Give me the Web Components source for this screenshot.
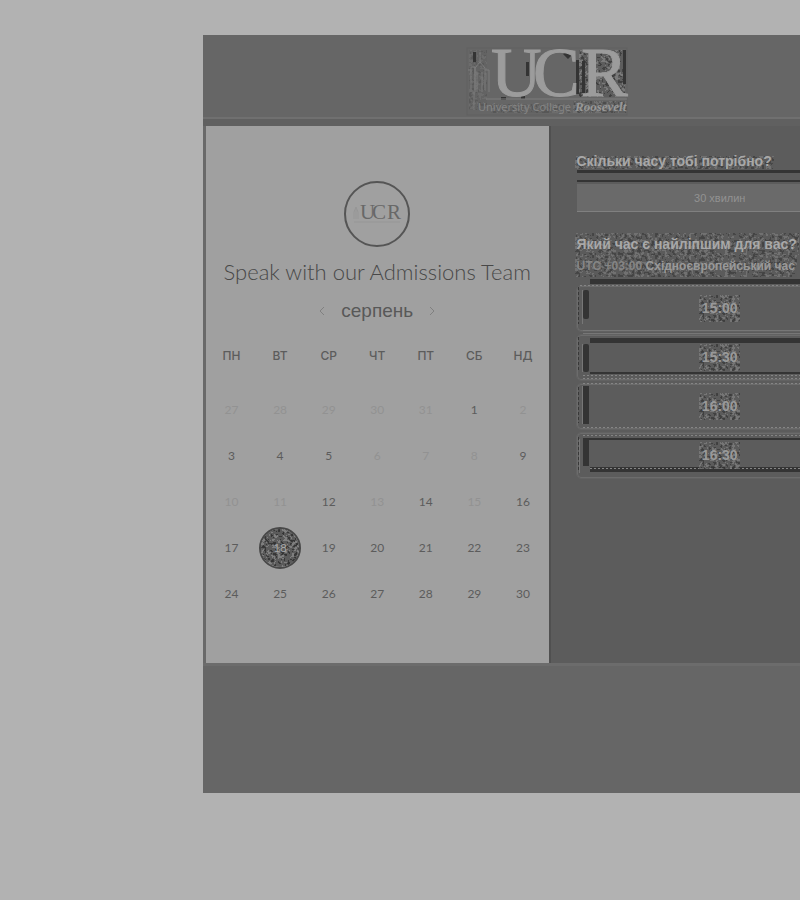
<!DOCTYPE html>
<html lang="uk">
<head>
<meta charset="utf-8">
<meta name="viewport" content="width=device-width, initial-scale=1">
<title>UCR – Admissions</title>
<style>
  body { margin: 0; min-height: 100vh; background: #b2b2b2; font-family: "Liberation Sans", Arial, sans-serif; color: #4e4e4e; }
</style>
</head>
<body>
<meeting-page>
  <ucr-logo slot="header"></ucr-logo>
  <meeting-calendar slot="calendar" month="серпень">Speak with our Admissions Team</meeting-calendar>
  <time-picker slot="times"></time-picker>
</meeting-page>
<script>
const define = (name, html, setup) => {
  const template = document.createElement('template');
  template.innerHTML = html;
  customElements.define(name, class extends HTMLElement {
    constructor() {
      super();
      this.attachShadow({ mode: 'open' }).append(template.content.cloneNode(true));
    }
    connectedCallback() { if (setup) setup(this, this.shadowRoot); }
  });
};

/* Speckled texture that fills its host */
define('grain-patch', `
<style>
  :host { display: block; pointer-events: none; }
  svg { display: block; width: 100%; height: 100%; }
</style>
<svg aria-hidden="true">
  <filter id="g" x="0" y="0" width="100%" height="100%" color-interpolation-filters="sRGB">
    <feTurbulence type="fractalNoise" baseFrequency="0.3" numOctaves="2" seed="7"/>
    <feColorMatrix values="1 0 0 0 0  1 0 0 0 0  1 0 0 0 0  0 0 0 0 1"/>
    <feComponentTransfer>
      <feFuncR type="discrete" tableValues=".2 .2 .2 .22 .36 .36 .5 .5 .5 .5"/>
      <feFuncG type="discrete" tableValues=".2 .2 .2 .22 .36 .36 .5 .5 .5 .5"/>
      <feFuncB type="discrete" tableValues=".2 .2 .2 .22 .36 .36 .5 .5 .5 .5"/>
    </feComponentTransfer>
  </filter>
  <rect width="100%" height="100%" filter="url(#g)"/>
</svg>`);

define('ucr-logo', `
<style>
  :host { display: block; position: relative; width: 164px; height: 68px; }
  grain-patch { position: absolute; opacity: .8; }
  .r { left: 112px; top: 2px; width: 46px; height: 47px; }
  .k { left: 106px; top: 53px; width: 54px; height: 12px; opacity: .5; }
  .l { left: 2px; top: 2px; width: 18px; height: 60px; opacity: .25; }
  .u { left: 24px; top: 56px; width: 80px; height: 9px; opacity: .3; }
  svg { position: relative; display: block; width: 164px; height: 68px; overflow: visible; }
</style>
<grain-patch class="l"></grain-patch><grain-patch class="r"></grain-patch>
<grain-patch class="u"></grain-patch><grain-patch class="k"></grain-patch>
<svg viewBox="0 0 164 68" role="img" aria-label="UCR University College Roosevelt">
  <g fill="#343434">
    <path d="M59 14h3v14h-3zM109 12h3v34h-3zM115 13h3v32h-3zM156 2h3v34h-3zM96 6l5-3 4 4-4 4zM6 4h3v10h-3zM34 49h5v3h-5zM54 48h4v3h-4z"/>
  </g>
  <rect x="0" y="0" width="160" height="67" fill="none" stroke="#616161"/>
  <g fill="none" stroke="#7c7c7c" stroke-width="1">
    <path d="M13 4v10l-5 6v22M13 14l5 6v22M1 22h3v22M4 22v-3h4v25M18 22h4v22M10 24v20M15 24v20M7 44v18"/>
    <path d="M19 51h141"/>
  </g>
  <text x="24 66 114" y="48" font-family="Liberation Serif, Times New Roman, serif" font-size="70" fill="#9c9c9c" stroke="#9c9c9c">UCR</text>
  <text x="11" y="63" font-family="Noto Sans, sans-serif" font-size="11" fill="#858585">University College</text>
  <text x="108" y="63" font-family="Liberation Serif, serif" font-weight="700" font-style="italic" font-size="13" fill="#989898">Roosevelt</text>
</svg>`);

define('ucr-badge', `
<style>
  :host { display: block; width: 67px; height: 67px; }
  svg { display: block; width: 100%; height: 100%; overflow: visible; }
</style>
<svg viewBox="0 0 67 67" role="img" aria-label="UCR">
  <circle cx="33" cy="33" r="32" fill="none" stroke="#555" stroke-width="2"/>
  <text x="16 28 43" y="38" font-family="Liberation Serif, serif" font-size="21" fill="#686868">UCR</text>
  <path d="M10 38v-7l2-5 2 5v7M12 26v12M10 41h46" fill="none" stroke="#969696"/>
</svg>`);

define('meeting-page', `
<style>
  :host { display: block; overflow: hidden; padding: 35px 0 107px 203px; }
  main { min-width: 692px; background: #666; }
  header { display: flex; justify-content: center; padding: 13px 0 0; height: 69px; border-bottom: 2px solid #707070; }
  .gap { height: 7px; background: #606060; }
  .body { display: grid; grid-template-columns: 1fr 1fr; padding: 0 4px 0 3px; background: #696969; }
  .times { background: #5c5c5c; box-shadow: inset 2px 0 #505050; display: grid; }
  .cal { background: #a0a0a0; display: grid; }
  footer { height: 127px; border-top: 3px solid #6c6c6c; }
</style>
<main>
  <header><slot name="header"></slot></header>
  <div class="gap"></div>
  <div class="body">
    <section class="cal"><slot name="calendar"></slot></section>
    <section class="times"><slot name="times"></slot></section>
  </div>
  <footer></footer>
</main>`);

define('meeting-calendar', `
<style>
  :host { display: block; padding: 55px 0 47px; }
  ucr-badge { margin: 0 auto; }
  h1 { margin: 10px 0 0; font: 300 22px/28px Lato, sans-serif; text-align: center; color: #484848; white-space: nowrap; }
  nav { display: flex; justify-content: center; align-items: center; gap: 16px; height: 28px; margin: 11px 0 16px; }
  h2 { margin: 0; font: 400 19px/28px "Liberation Sans", sans-serif; color: #585858; }
  button { appearance: none; border: 0; padding: 0; background: none; color: inherit; font: inherit; }
  nav button { width: 6px; height: 28px; }
  nav svg { display: block; width: 6px; height: 10px; margin: auto; fill: none; stroke: #808080; stroke-width: 1; }
  table { width: 340px; margin: 0 auto; border-collapse: collapse; table-layout: fixed; }
  th, td { padding: 0; text-align: center; }
  th { height: 30px; padding-bottom: 15px; font: 500 12px/30px Inter, sans-serif; color: #5c5c5c; }
  td { height: 46px; font: 400 12px/46px Lato, sans-serif; color: #5c5c5c; }
  td button { width: 42px; height: 42px; border-radius: 50%; position: relative; overflow: hidden; vertical-align: middle; line-height: 42px; }
  button:disabled { color: #929292; }
  .on { border: 2px solid #484848; color: #a8a8a8; line-height: 38px; }
  .on grain-patch { position: absolute; inset: 0; }
  .on span { position: relative; display: block; }
</style>
<ucr-badge></ucr-badge>
<h1><slot></slot></h1>
<nav aria-label="Місяць">
  <button aria-label="Назад"><svg viewBox="0 0 6 10"><path d="M5 1 1 5l4 4"/></svg></button>
  <h2></h2>
  <button aria-label="Далі"><svg viewBox="0 0 6 10"><path d="m1 1 4 4-4 4"/></svg></button>
</nav>
<table><thead><tr></tr></thead><tbody></tbody></table>`, (host, root) => {
  root.querySelector('h2').textContent = host.getAttribute('month');
  root.querySelector('thead tr').innerHTML =
    ['ПН', 'ВТ', 'СР', 'ЧТ', 'ПТ', 'СБ', 'НД'].map(d => `<th scope="col">${d}</th>`).join('');
  const weeks = [
    [27, 28, 29, 30, 31, 1, 2], [3, 4, 5, 6, 7, 8, 9], [10, 11, 12, 13, 14, 15, 16],
    [17, 18, 19, 20, 21, 22, 23], [24, 25, 26, 27, 28, 29, 30]
  ];
  const off = [[27, 28, 29, 30, 31, 2], [6, 7, 8], [10, 11, 13, 15], [], []];
  root.querySelector('tbody').innerHTML = weeks.map((w, i) => '<tr>' + w.map(d =>
    d === 18 ? `<td><button class="on" aria-pressed="true"><grain-patch></grain-patch><span>${d}</span></button></td>`
             : `<td><button ${off[i].includes(d) ? 'disabled' : ''}>${d}</button></td>`).join('') + '</tr>').join('');
});

define('time-picker', `
<style>
  :host { display: block; padding: 24px 28px; }
  h2, p { position: relative; margin: 0; white-space: nowrap; width: max-content; color: #a8a8a8; }
  h2 { font: 700 14px/22px "Liberation Sans", sans-serif; }
  p { margin-bottom: 2px; font: 700 12px/22px "Liberation Sans", sans-serif; color: #999; }
  p i { font-style: normal; color: #858585; }
  h2 span, p span { position: relative; }
  h2 grain-patch, p grain-patch { position: absolute; inset: 0 -2px; opacity: .6; }
  .first grain-patch { inset: 6px -2px 3px; }
  button { appearance: none; display: block; width: 100%; padding: 0; border: 0; background: none; text-align: center; }
  .length { position: relative; height: 28px; margin: 12px 0 21px; background: #6a6a6a; border-bottom: 1px solid #808080; color: #929292; font: 400 11px/26px "Liberation Sans", sans-serif; }
  .length::before { content: ""; position: absolute; inset: -14px 0 auto 0; height: 7px; border: solid #343434; border-width: 3px 0 2px; }
  .list { position: relative; display: grid; gap: 4px; padding-top: 7px; }
  .list button { height: 45px; border: 1px solid #6c6c6c; border-radius: 4px; outline: 1px solid #626262; color: #999; font: 700 14px/43px "Liberation Sans", sans-serif; }
  .list button span { position: relative; z-index: 0; display: inline-block; width: 41px; line-height: 27px; }
  .list button grain-patch { position: absolute; inset: 0; z-index: -1; opacity: .75; }
  .lines { position: absolute; left: 0; top: 0; width: 100%; height: 204px; pointer-events: none; }
</style>
<h2 class="first"><grain-patch></grain-patch><span>Скільки часу тобі потрібно?</span></h2>
<button class="length">30 хвилин</button>
<h2><grain-patch></grain-patch><span>Який час є найліпшим для вас?</span></h2>
<p><grain-patch></grain-patch><span><i>UTC +03:00</i> Східноєвропейський час</span></p>
<div class="list">
  <svg class="lines" aria-hidden="true">
    <g fill="#343434">
      <rect x="13" y="0" width="100%" height="5"/><rect x="6" y="11" width="6" height="29" rx="2"/>
      <rect x="13" y="59" width="100%" height="5"/><rect x="6" y="65" width="6" height="28" rx="2"/>
      <rect x="13" y="93" width="100%" height="2"/><rect x="6" y="107" width="6" height="38"/>
      <rect x="6" y="159" width="100%" height="2"/><rect x="6" y="160" width="6" height="27"/>
      <rect x="13" y="188" width="100%" height="5"/>
    </g>
    <g stroke="#858585" fill="none" stroke-width="1" shape-rendering="crispEdges">
      <path d="M5 11v34M5 65v28M5 107v38M2 160v34" stroke="#777"/>
      <path d="M6 51h400M6 54h400" stroke="#777"/>
      <path d="M3 6h400M6 96h400M6 99h400M6 104h400M6 148h400M6 156h400M13 189h400" stroke-dasharray="2 2"/>
      <path d="M1 8v37M1 58v35M1 108v36M1 158v33" stroke="#383838" stroke-dasharray="3 2"/>
    </g>
  </svg>
</div>`, (host, root) => {
  const list = root.querySelector('.list');
  for (const t of ['15:00', '15:30', '16:00', '16:30']) {
    const b = document.createElement('button');
    b.innerHTML = `<span><grain-patch></grain-patch>${t}</span>`;
    list.append(b);
  }
});
</script>
</body>
</html>
